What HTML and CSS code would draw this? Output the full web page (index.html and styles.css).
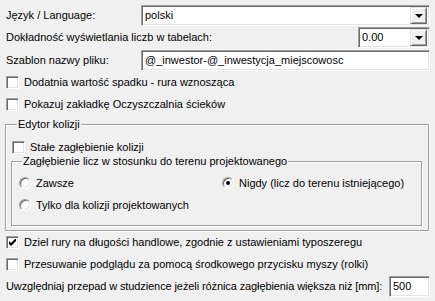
FILE: index.html
```html
<!DOCTYPE html>
<html lang="pl">
<head>
<meta charset="utf-8">
<link rel="stylesheet" href="styles.css">
</head>
<body>
<div class="pane">
  <div class="row r1">
    <span class="lbl">Język / Language:</span>
    <div class="combo wide"><span class="val">polski</span><span class="btn"><i class="tri"></i></span></div>
  </div>
  <div class="row r2">
    <span class="lbl">Dokładność wyświetlania liczb w tabelach:</span>
    <div class="combo small"><span class="val">0.00</span><span class="btn"><i class="tri"></i></span></div>
  </div>
  <div class="row r3">
    <span class="lbl">Szablon nazwy pliku:</span>
    <div class="edit wide"><span class="val">@_inwestor-@_inwestycja_miejscowosc</span></div>
  </div>
  <div class="check top"><span class="box"></span><span>Dodatnia wartość spadku - rura wznosząca</span></div>
  <div class="check"><span class="box"></span><span>Pokazuj zakładkę Oczyszczalnia ścieków</span></div>

  <fieldset class="group outer">
    <legend>Edytor kolizji</legend>
    <div class="check inner-check"><span class="box"></span><span>Stałe zagłębienie kolizji</span></div>
    <fieldset class="group inner">
      <legend>Zagłębienie licz w stosunku do terenu projektowanego</legend>
      <div class="radios">
        <div class="radio"><span class="dot"></span><span>Zawsze</span></div>
        <div class="radio"><span class="dot on"></span><span>Nigdy (licz do terenu istniejącego)</span></div>
        <div class="radio"><span class="dot"></span><span>Tylko dla kolizji projektowanych</span></div>
      </div>
    </fieldset>
  </fieldset>

  <div class="check after"><span class="box"><svg width="7" height="7" viewBox="0 0 7 7"><path d="M0 2v3l2 2 5-5V-1L2 4z" fill="#000"/></svg></span><span>Dziel rury na długości handlowe, zgodnie z ustawieniami typoszeregu</span></div>
  <div class="check"><span class="box"></span><span>Przesuwanie podglądu za pomocą środkowego przycisku myszy (rolki)</span></div>
  <div class="row last">
    <span class="lbl tight">Uwzględniaj przepad w studzience jeżeli różnica zagłębienia większa niż [mm]:</span>
    <div class="edit tiny"><span class="val">500</span></div>
  </div>
</div>
</body>
</html>
```

FILE: styles.css
```css
html, body {
  margin: 0;
  padding: 0;
  background: #f0f0f0;
}
body {
  width: 435px;
  height: 301px;
  overflow: hidden;
  font-family: "Liberation Sans", Arial, sans-serif;
  font-size: 11px;
  line-height: 13px;
  color: #000;
}
.pane {
  padding: 5px 5px 0 6px;
}
.row {
  display: flex;
  align-items: center;
  justify-content: space-between;
  height: 21px;
}
.r1 { margin-bottom: 1px; }
.r2 { margin-bottom: 2px; }
.lbl { white-space: nowrap; }
.tight { letter-spacing: -0.1px; }

.combo, .edit {
  box-sizing: border-box;
  height: 21px;
  background: #fff;
  border: 1px solid;
  border-color: #a0a0a0 #fff #fff #a0a0a0;
  box-shadow: inset 1px 1px 0 #696969, inset -1px -1px 0 #e3e3e3;
  display: flex;
  align-items: center;
  padding: 2px;
}
.wide { width: 289px; }
.small { width: 72px; }
.tiny { width: 41px; }
.val {
  flex: 1;
  padding-left: 1px;
  white-space: nowrap;
  overflow: hidden;
}
.btn {
  box-sizing: border-box;
  width: 17px;
  height: 17px;
  background: #f0f0f0;
  border: 1px solid;
  border-color: #e3e3e3 #696969 #696969 #e3e3e3;
  box-shadow: inset 1px 1px 0 #fff, inset -1px -1px 0 #a0a0a0;
  display: flex;
  align-items: center;
  justify-content: center;
}
.tri {
  width: 0;
  height: 0;
  border-left: 4px solid transparent;
  border-right: 4px solid transparent;
  border-top: 4px solid #000;
  margin-top: 1px;
}

.check, .radio {
  display: flex;
  align-items: center;
  gap: 5px;
  height: 22px;
  white-space: nowrap;
}
.box {
  box-sizing: border-box;
  width: 13px;
  height: 13px;
  background: #fff;
  border: 1px solid;
  border-color: #a0a0a0 #fff #fff #a0a0a0;
  box-shadow: inset 1px 1px 0 #696969, inset -1px -1px 0 #e3e3e3;
  display: flex;
  align-items: center;
  justify-content: center;
  flex: none;
}
.box svg { display: block; }

.group {
  margin: 0;
  min-width: 0;
  border: 1px solid #a0a0a0;
  box-shadow: inset 1px 1px 0 #fff, 1px 1px 0 #fff;
}
.group legend {
  padding: 0 1px;
  background: #f0f0f0;
  line-height: 13px;
}
.outer {
  margin: 3px 1px 0 -1px;
  padding: 9px 6px 4px 6px;
}
.outer > legend { margin-left: 5px; }
.inner-check { height: 15px; }
.inner {
  margin: 0 0 0 -1px;
  padding: 4px 6px 9px 7px;
}
.inner > legend { margin-left: 3px; }
.radios {
  display: grid;
  grid-template-columns: 203px 1fr;
}
.radio { height: 22px; gap: 5px; }
.dot {
  box-sizing: border-box;
  width: 12px;
  height: 12px;
  border-radius: 50%;
  background: #fff;
  border: 1px solid;
  border-color: #a0a0a0 #fff #fff #a0a0a0;
  box-shadow: inset 1px 1px 0 #696969, inset -1px -1px 0 #e3e3e3;
  display: flex;
  align-items: center;
  justify-content: center;
  flex: none;
}
.dot.on::after {
  content: "";
  width: 4px;
  height: 4px;
  border-radius: 50%;
  background: #000;
}
.after { margin-top: 0; }
.last { height: 22px; }
```
